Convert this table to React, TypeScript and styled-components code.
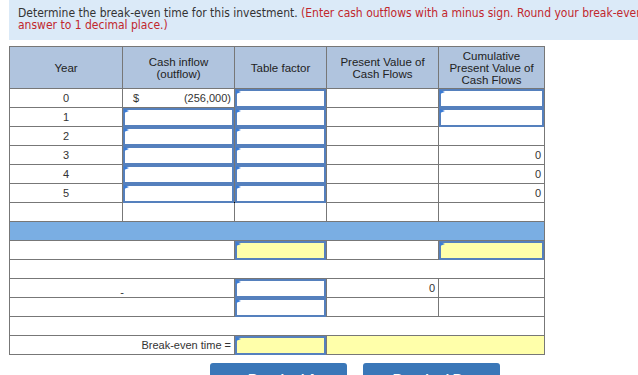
import React from 'react'
import styled, { createGlobalStyle } from 'styled-components'

const GlobalStyle = createGlobalStyle`
  html, body {
    margin: 0;
    padding: 0;
    overflow: hidden;
    background: #fff;
  }
`

const Page = styled.div`
  padding-left: 9px;
  font-family: 'Liberation Sans', Arial, sans-serif;
`

const Banner = styled.div`
  width: 720px;
  height: 40px;
  box-sizing: border-box;
  padding: 7px 9px 0;
  background: #dbeaf8;
  font-family: 'DejaVu Sans Condensed', 'DejaVu Sans', sans-serif;
  font-size: 12px;
  line-height: 12px;
  color: #333;
  white-space: nowrap;
`

const Hint = styled.span`
  color: #c1272d;
`

const Table = styled.table`
  margin-top: 6px;
  border-collapse: collapse;
  table-layout: fixed;
  width: 536px;
  font-size: 11px;
  color: #333;
`

const HeadCell = styled.th`
  height: 41px;
  padding: 0 4px;
  border: 1px solid #777;
  background: #b0c4de;
  font-weight: normal;
  font-size: 11.5px;
  color: #222;
  line-height: 12px;
  text-align: center;
`

const Cell = styled.td<{ $align?: 'left' | 'center' | 'right'; $fill?: string; $rule?: boolean }>`
  height: 18px;
  padding: 0 3px;
  border: 1px solid #777;
  ${(p) => (p.$rule ? 'border-bottom-color: #000;' : '')}
  background: ${(p) => p.$fill || '#fff'};
  text-align: ${(p) => p.$align || 'left'};
  vertical-align: middle;
  white-space: nowrap;
`

const InputCell = styled.td<{ $rule?: boolean }>`
  height: 18px;
  padding: 0;
  border: 1px solid #777;
  ${(p) => (p.$rule ? 'border-bottom-color: #000;' : '')}
`

const InputBox = styled.div<{ $yellow?: boolean }>`
  position: relative;
  height: 19px;
  margin: -1px 0 -1px 0;
  box-sizing: border-box;
  border: 2px solid #5580bd;
  background: ${(p) => (p.$yellow ? '#ffffaa' : '#fff')};

  &::before {
    content: '';
    position: absolute;
    top: -1px;
    left: -1px;
    border-top: 2.5px solid transparent;
    border-bottom: 2.5px solid transparent;
    border-left: 5px solid #3a7bd5;
  }
`

const Money = styled.div`
  display: flex;
  justify-content: space-between;
  padding-left: 7px;
`

const Dash = styled.span`
  position: relative;
  top: 4px;
`

const BandRow = styled.td`
  height: 18px;
  padding: 0;
  border: 1px solid #777;
  background: #7aaee3;
`

const Buttons = styled.div`
  display: flex;
  gap: 16px;
  margin: 8px 0 0 201px;
`

const NavButton = styled.button`
  width: 137px;
  height: 30px;
  border: none;
  border-radius: 3px;
  background: #3a77b8;
  color: #fff;
  font-family: 'Liberation Sans', Arial, sans-serif;
  font-size: 13px;
  font-weight: bold;
  padding: 0;
`

const Input = ({ yellow }: { yellow?: boolean }) => <InputBox $yellow={yellow} />

const years = [1, 2, 3, 4, 5]

export default function App() {
  return (
    <Page>
      <GlobalStyle />
      <Banner>
        Determine the break-even time for this investment.{' '}
        <Hint>
          (Enter cash outflows with a minus sign. Round your break-even
          <br />
          answer to 1 decimal place.)
        </Hint>
      </Banner>

      <Table>
        <colgroup>
          <col style={{ width: 113 }} />
          <col style={{ width: 112 }} />
          <col style={{ width: 92 }} />
          <col style={{ width: 112 }} />
          <col style={{ width: 106 }} />
        </colgroup>
        <thead>
          <tr>
            <HeadCell>Year</HeadCell>
            <HeadCell>
              Cash inflow
              <br />
              (outflow)
            </HeadCell>
            <HeadCell>Table factor</HeadCell>
            <HeadCell>
              Present Value of
              <br />
              Cash Flows
            </HeadCell>
            <HeadCell>
              Cumulative
              <br />
              Present Value of
              <br />
              Cash Flows
            </HeadCell>
          </tr>
        </thead>
        <tbody>
          <tr>
            <Cell $align="center">0</Cell>
            <Cell>
              <Money>
                <span>$</span>
                <span>(256,000)</span>
              </Money>
            </Cell>
            <InputCell>
              <Input />
            </InputCell>
            <Cell />
            <InputCell>
              <Input />
            </InputCell>
          </tr>
          {years.map((y) => (
            <tr key={y}>
              <Cell $align="center">{y}</Cell>
              <InputCell $rule={y === 5}>
                <Input />
              </InputCell>
              <InputCell>
                <Input />
              </InputCell>
              <Cell />
              {y === 1 ? (
                <InputCell>
                  <Input />
                </InputCell>
              ) : (
                <Cell $align="right">{y >= 3 ? '0' : ''}</Cell>
              )}
            </tr>
          ))}
          <tr>
            <Cell />
            <Cell />
            <Cell />
            <Cell />
            <Cell />
          </tr>
          <tr>
            <BandRow colSpan={5} />
          </tr>
          <tr>
            <Cell colSpan={2} />
            <InputCell>
              <Input yellow />
            </InputCell>
            <Cell />
            <InputCell>
              <Input yellow />
            </InputCell>
          </tr>
          <tr>
            <Cell colSpan={5} />
          </tr>
          <tr>
            <Cell colSpan={2} $align="center">
              <Dash>-</Dash>
            </Cell>
            <InputCell>
              <Input />
            </InputCell>
            <Cell $align="right">0</Cell>
            <Cell />
          </tr>
          <tr>
            <Cell colSpan={2} />
            <InputCell>
              <Input />
            </InputCell>
            <Cell />
            <Cell />
          </tr>
          <tr>
            <Cell colSpan={5} />
          </tr>
          <tr>
            <Cell colSpan={2} $align="right">
              Break-even time =
            </Cell>
            <InputCell>
              <Input yellow />
            </InputCell>
            <Cell colSpan={2} $fill="#ffffaa" />
          </tr>
        </tbody>
      </Table>

      <Buttons>
        <NavButton>‹ Required A</NavButton>
        <NavButton>Required B ›</NavButton>
      </Buttons>
    </Page>
  )
}
